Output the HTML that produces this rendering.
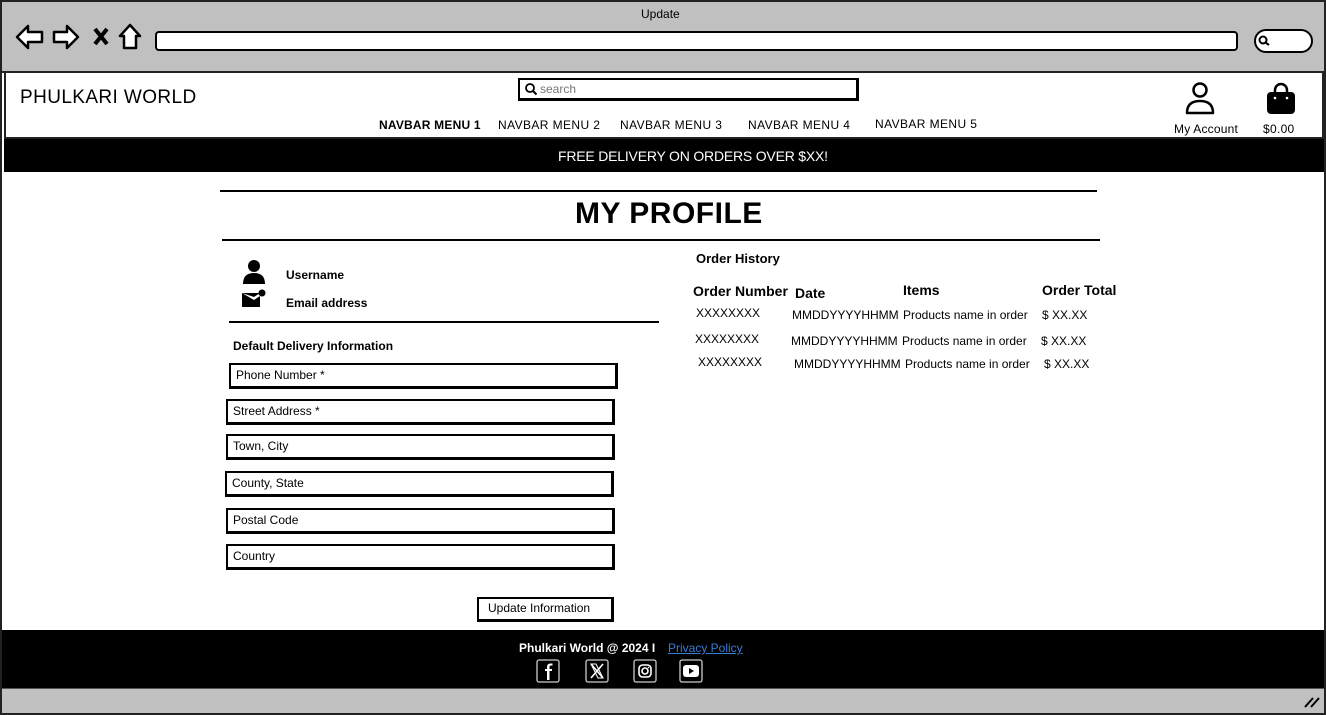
<!DOCTYPE html>
<html><head><meta charset="utf-8"><style>
*{margin:0;padding:0;box-sizing:border-box}
body{width:1326px;height:715px;overflow:hidden;background:#fff;font-family:"Liberation Sans",sans-serif;color:#000;position:relative}
.a{position:absolute;white-space:nowrap}
.inp{position:absolute;border:2px solid #000;border-right-width:3px;border-bottom-width:3px;font-size:12px;padding:3px 5px;background:#fff}
.t{font-size:12px}
</style></head><body>
<!-- browser chrome -->
<div class="a" style="left:0;top:0;width:1326px;height:73px;background:#c0c0c0;border:2px solid #222;border-bottom:2px solid #222"></div>
<div class="a t" style="left:641px;top:7px;font-size:12px">Update</div>
<svg class="a" style="left:14px;top:22px" width="130" height="30" viewBox="0 0 130 30">
<path d="M3 15 L14 4 L14 10 L28 10 L28 20 L14 20 L14 26 Z" fill="#fff" stroke="#000" stroke-width="2.5" stroke-linejoin="round"/>
<path d="M64 15 L53 4 L53 10 L40 10 L40 20 L53 20 L53 26 Z" fill="#fff" stroke="#000" stroke-width="2.5" stroke-linejoin="round"/>
<path d="M81 7 L93 22 M93 7 L81 22" stroke="#000" stroke-width="4"/>
<path d="M116 3 L106 14 L110 14 L110 26 L122 26 L122 14 L126 14 Z" fill="#fff" stroke="#000" stroke-width="2.5" stroke-linejoin="round"/>
</svg>
<div class="a" style="left:155px;top:31px;width:1083px;height:20px;background:#fff;border:2.5px solid #000;border-radius:4px"></div>
<div class="a" style="left:1254px;top:29px;width:59px;height:24px;background:#fff;border:2.5px solid #000;border-radius:12px"></div>
<svg class="a" style="left:1257px;top:34px" width="14" height="14"><circle cx="6" cy="6" r="3.5" fill="none" stroke="#000" stroke-width="2"/><path d="M8.5 8.5 L12 11" stroke="#000" stroke-width="2"/></svg>
<!-- page frame -->
<div class="a" style="left:0;top:72px;width:1326px;height:643px;border:2px solid #222;border-top:none"></div>
<div class="a" style="left:4px;top:72px;width:1320px;height:67px;border:2px solid #222;border-top:none"></div>
<div class="a" style="left:20px;top:87px;font-size:19px;letter-spacing:0.4px">PHULKARI WORLD</div>
<div class="a" style="left:518px;top:78px;width:341px;height:23px;border:2px solid #000;border-right-width:3px;border-bottom-width:3px"></div>
<svg class="a" style="left:524px;top:82px" width="14" height="14"><circle cx="6" cy="6" r="4" fill="none" stroke="#000" stroke-width="1.8"/><path d="M9 9 L12.5 12.5" stroke="#000" stroke-width="2"/></svg>
<div class="a" style="left:540px;top:82px;font-size:12px;color:#777">search</div>
<div class="a" style="left:379px;top:118px;font-size:12px;font-weight:bold;letter-spacing:0.2px">NAVBAR MENU 1</div>
<div class="a" style="left:498px;top:118px;font-size:12px;letter-spacing:0.4px">NAVBAR MENU 2</div>
<div class="a" style="left:620px;top:118px;font-size:12px;letter-spacing:0.4px">NAVBAR MENU 3</div>
<div class="a" style="left:748px;top:118px;font-size:12px;letter-spacing:0.4px">NAVBAR MENU 4</div>
<div class="a" style="left:875px;top:117px;font-size:12px;letter-spacing:0.4px">NAVBAR MENU 5</div>
<svg class="a" style="left:1184px;top:81px" width="32" height="34"><circle cx="16" cy="9" r="6.5" fill="none" stroke="#000" stroke-width="2.5"/><path d="M3 32 Q3 20 16 20 Q29 20 29 32 Z" fill="none" stroke="#000" stroke-width="2.5" stroke-linejoin="round"/></svg>
<div class="a" style="left:1174px;top:122px;font-size:12px;letter-spacing:0.2px">My Account</div>
<svg class="a" style="left:1265px;top:81px" width="32" height="34"><path d="M10 14 V9 A6 6 0 0 1 22 9 V14" fill="none" stroke="#000" stroke-width="2.5"/><rect x="2" y="11" width="28" height="22" rx="4" fill="#000"/><circle cx="10" cy="17" r="1.3" fill="#fff"/><circle cx="22" cy="17" r="1.3" fill="#fff"/></svg>
<div class="a" style="left:1263px;top:122px;font-size:12px;letter-spacing:0.3px">$0.00</div>
<div class="a" style="left:4px;top:139px;width:1320px;height:33px;background:#000"></div>
<div class="a" style="left:558px;top:148px;font-size:14px;color:#fff;letter-spacing:-0.2px">FREE DELIVERY ON ORDERS OVER $XX!</div>
<!-- title -->
<div class="a" style="left:220px;top:190px;width:877px;height:2px;background:#000"></div>
<div class="a" style="left:575px;top:197px;font-size:30px;font-weight:bold;letter-spacing:0.5px">MY PROFILE</div>
<div class="a" style="left:222px;top:239px;width:878px;height:2px;background:#000"></div>
<!-- left -->
<svg class="a" style="left:241px;top:259px" width="28" height="52"><circle cx="13" cy="7" r="6" fill="#000"/><path d="M2 25 Q2 14 13 14 Q24 14 24 25 Z" fill="#000"/><path d="M1 34 L13 41 L19 37 L19 48 L1 48 Z" fill="#000"/><path d="M1 34 L19 34 L13 38 Z" fill="#000"/><circle cx="21" cy="34" r="3.5" fill="#000"/></svg>
<div class="a" style="left:286px;top:268px;font-size:12px;font-weight:bold">Username</div>
<div class="a" style="left:286px;top:296px;font-size:12px;font-weight:bold">Email address</div>
<div class="a" style="left:229px;top:321px;width:430px;height:2px;background:#000"></div>
<div class="a" style="left:233px;top:339px;font-size:12px;font-weight:bold">Default Delivery Information</div>
<div class="inp" style="left:229px;top:363px;width:389px;height:26px">Phone Number *</div>
<div class="inp" style="left:226px;top:399px;width:389px;height:26px">Street Address *</div>
<div class="inp" style="left:226px;top:434px;width:389px;height:26px">Town, City</div>
<div class="inp" style="left:225px;top:471px;width:389px;height:26px">County, State</div>
<div class="inp" style="left:226px;top:508px;width:389px;height:26px">Postal Code</div>
<div class="inp" style="left:226px;top:544px;width:389px;height:26px">Country</div>
<div class="inp" style="left:477px;top:597px;width:137px;height:25px;padding:2px 9px">Update Information</div>
<!-- right -->
<div class="a" style="left:696px;top:251px;font-size:13px;font-weight:bold">Order History</div>
<div class="a" style="left:693px;top:283px;font-size:14px;font-weight:bold">Order Number</div>
<div class="a" style="left:795px;top:285px;font-size:14px;font-weight:bold">Date</div>
<div class="a" style="left:903px;top:282px;font-size:14px;font-weight:bold">Items</div>
<div class="a" style="left:1042px;top:282px;font-size:14px;font-weight:bold">Order Total</div>
<div class="a t" style="left:696px;top:306px">XXXXXXXX</div><div class="a t" style="left:792px;top:308px">MMDDYYYYHHMM</div><div class="a t" style="left:903px;top:308px">Products name in order</div><div class="a t" style="left:1042px;top:308px">$ XX.XX</div>
<div class="a t" style="left:695px;top:332px">XXXXXXXX</div><div class="a t" style="left:791px;top:334px">MMDDYYYYHHMM</div><div class="a t" style="left:902px;top:334px">Products name in order</div><div class="a t" style="left:1041px;top:334px">$ XX.XX</div>
<div class="a t" style="left:698px;top:355px">XXXXXXXX</div><div class="a t" style="left:794px;top:357px">MMDDYYYYHHMM</div><div class="a t" style="left:905px;top:357px">Products name in order</div><div class="a t" style="left:1044px;top:357px">$ XX.XX</div>
<!-- footer -->
<div class="a" style="left:2px;top:630px;width:1322px;height:58px;background:#000"></div>
<div class="a" style="left:519px;top:641px;font-size:12px;font-weight:bold;color:#fff">Phulkari World @ 2024 I</div>
<div class="a" style="left:668px;top:641px;font-size:12px;color:#3a7bd5;text-decoration:underline">Privacy Policy</div>
<svg class="a" style="left:535px;top:658px" width="170" height="26">
<g fill="none" stroke="#ccc" stroke-width="1.3"><rect x="2" y="2" width="22" height="22" rx="2"/><rect x="51" y="2" width="22" height="22" rx="2"/><rect x="99" y="2" width="22" height="22" rx="2"/><rect x="145" y="2" width="22" height="22" rx="2"/></g>
<path d="M14.5 22 V13 H17 V11 H14.5 V9 Q14.5 7.5 16 7.5 H17.5 V5.5 H15.5 Q12 5.5 12 9 V11 H10 V13 H12 V22 Z" fill="#fff"/>
<path d="M56 6 L68 20 M68 6 L56 20" stroke="#fff" stroke-width="1.6"/><path d="M56 6 L61 6 L68 20 L63 20 Z" fill="none" stroke="#fff" stroke-width="1"/>
<rect x="104" y="7" width="12" height="12" rx="3.5" fill="none" stroke="#fff" stroke-width="1.6"/><circle cx="110" cy="13" r="3" fill="none" stroke="#fff" stroke-width="1.6"/><circle cx="113.5" cy="9.5" r="0.8" fill="#fff"/>
<rect x="148" y="7" width="16" height="12" rx="3" fill="#fff"/><path d="M154 10 L154 16 L159 13 Z" fill="#000"/>
</svg>
<div class="a" style="left:2px;top:688px;width:1322px;height:25px;background:#c0c0c0;border-top:1px solid #555"></div>
<svg class="a" style="left:1303px;top:695px" width="18" height="14"><path d="M2 12 L10 3 M8 12 L16 3" stroke="#000" stroke-width="2"/></svg>
</body></html>
